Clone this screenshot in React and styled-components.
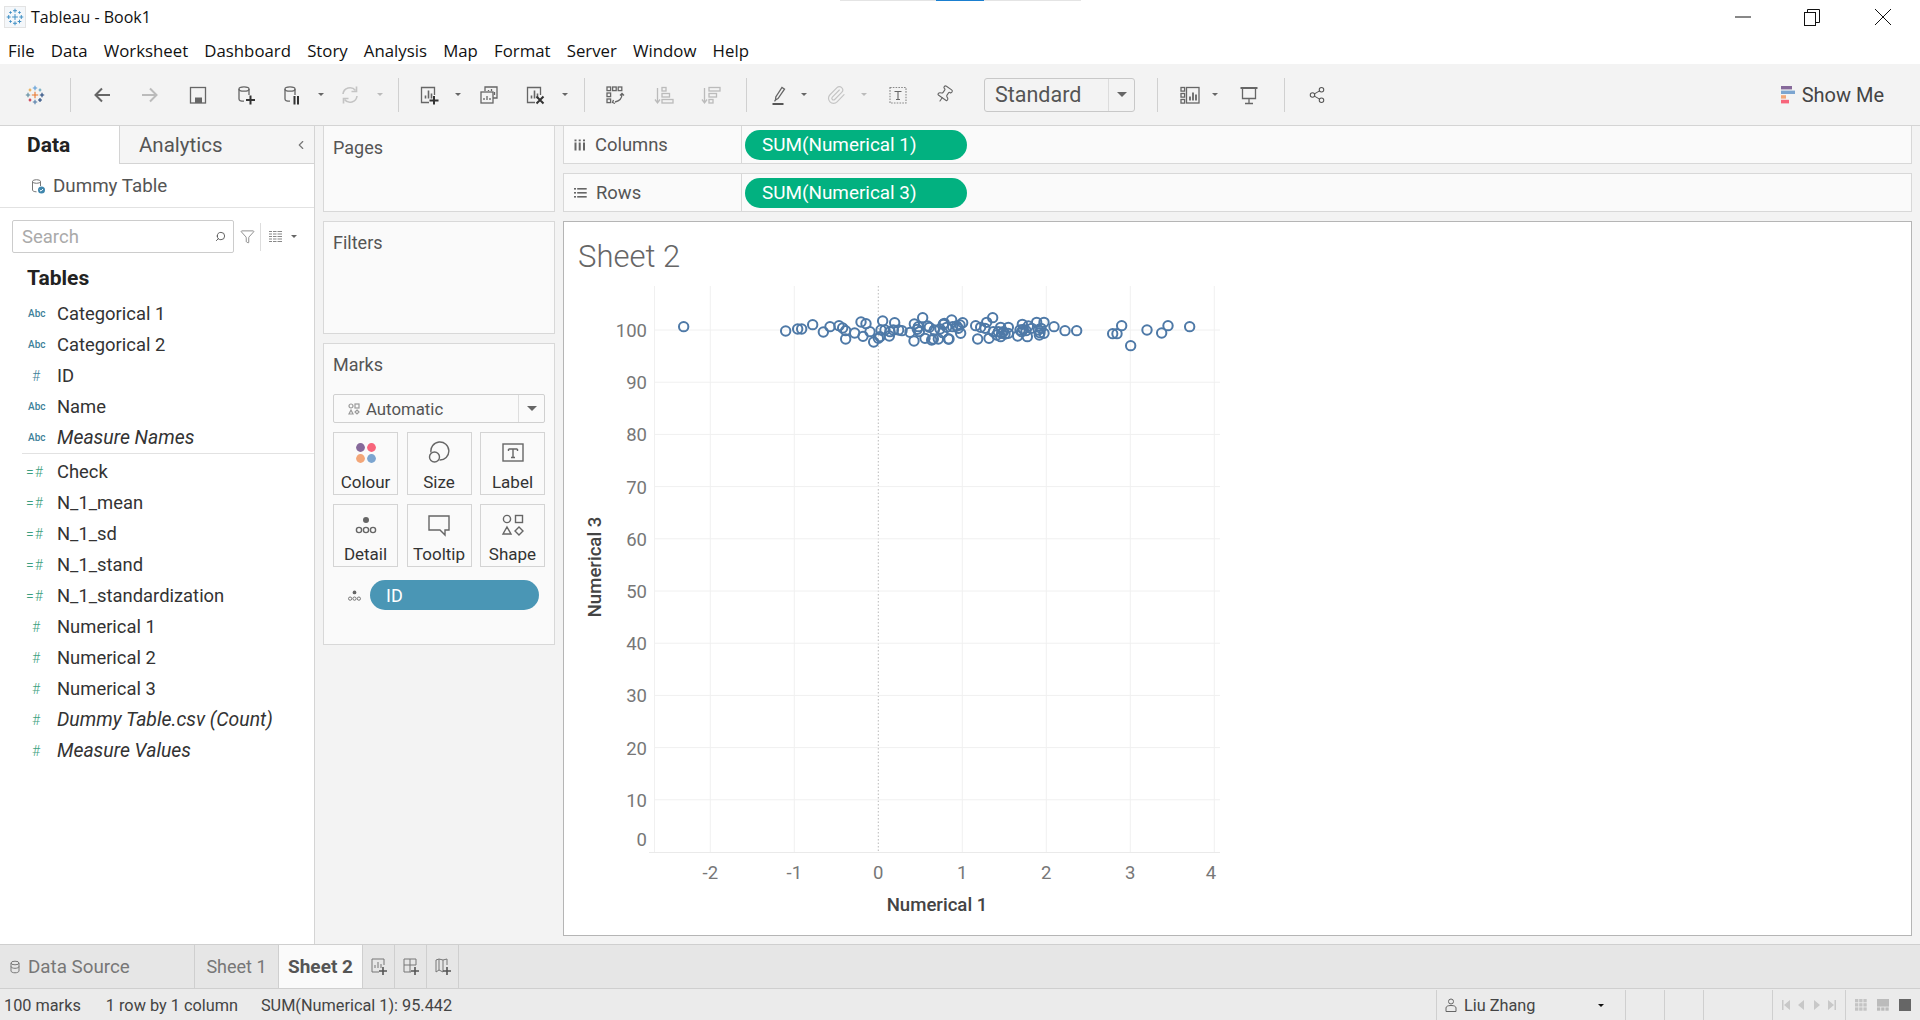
import React from "react";
import styled, { createGlobalStyle } from "styled-components";
import { Paperclip, Pin, Share2, ChevronLeft, Search as SearchIcon, Filter } from "lucide-react";

const GlobalStyle = createGlobalStyle`
  html, body { margin: 0; padding: 0; height: 100%; background: #f3f3f3; overflow: hidden; }
  body { font-family: "Roboto", "Liberation Sans", sans-serif; color: #333; }
  * { box-sizing: border-box; }
`;

// ---------- data ----------
const dims = [
  { name: "Categorical 1", kind: "abc" },
  { name: "Categorical 2", kind: "abc" },
  { name: "ID", kind: "dimnum" },
  { name: "Name", kind: "abc" },
  { name: "Measure Names", kind: "abc", italic: true },
];
const measures = [
  { name: "Check", kind: "calc" },
  { name: "N_1_mean", kind: "calc" },
  { name: "N_1_sd", kind: "calc" },
  { name: "N_1_stand", kind: "calc" },
  { name: "N_1_standardization", kind: "calc" },
  { name: "Numerical 1", kind: "num" },
  { name: "Numerical 2", kind: "num" },
  { name: "Numerical 3", kind: "num" },
  { name: "Dummy Table.csv (Count)", kind: "num", italic: true },
  { name: "Measure Values", kind: "num", italic: true },
];
const menus = ["File", "Data", "Worksheet", "Dashboard", "Story", "Analysis", "Map", "Format", "Server", "Window", "Help"];

// points read off the chart, [x, y] in zoomed crop units
const leftPts = [[71,110],[377,123],[413,117],[425,117],[458,104],[490,126],[510,110],[537,107],[548,114],[557,122],[557,147],[584,129],[609,139],[603,96],[618,101],[630,125],[641,156],[655,145],[660,140],[668,93],[663,120],[675,120],[688,138],[690,125],[704,98],[700,120],[716,120],[726,122],[750,127],[762,153],[763,102],[772,118],[778,125],[788,83],[775,110],[795,145],[803,108],[808,112],[815,150],[820,147],[823,120],[835,147],[840,117],[853,100],[865,147]];
const rightPts = [[10,103],[27,147],[35,90],[38,110],[55,115],[62,130],[68,98],[60,105],[107,107],[122,112],[113,147],[140,97],[158,83],[147,145],[160,125],[135,115],[182,112],[175,125],[190,125],[182,140],[195,132],[205,112],[205,130],[233,138],[240,120],[247,103],[250,118],[262,140],[265,108],[275,115],[290,97],[295,120],[298,135],[303,115],[312,97],[312,130],[342,110],[375,122],[410,122],[518,131],[531,131],[545,107],[572,167],[621,120],[665,129],[684,107],[749,110],[185,130],[300,128],[258,122],[20,112],[50,108],[170,135],[245,125],[8,128]];
const points = [
  ...leftPts.map(([x, y]) => [660 + x / 3, 290 + y / 3]),
  ...rightPts.map(([x, y]) => [940 + x / 3, 290 + y / 3]),
];

// ---------- icons ----------
const Svg = ({ size = 20, color = "#666", sw = 1.3, children }) => (
  <svg width={size} height={size} viewBox="0 0 20 20" fill="none" stroke={color} strokeWidth={sw}>
    {children}
  </svg>
);

const crosses = [
  [10, 10, 3.2, "#e8762c"], [10, 3, 2.2, "#5b9bd5"], [10, 17, 2.2, "#4e79a7"], [3, 10, 2.2, "#59879b"], [17, 10, 2.2, "#1f447a"],
  [5, 5, 1.4, "#e8a33c"], [15, 5, 1.4, "#5fa2b8"], [5, 15, 1.4, "#c72035"], [15, 15, 2, "#1f447a"],
];
const TableauLogo = ({ size = 20, mono }) => (
  <svg width={size} height={size} viewBox="0 0 20 20" fill="none" strokeWidth={1.1}>
    {crosses.map(([x, y, l, c], i) => (
      <path key={i} d={`M${x - l} ${y}H${x + l}M${x} ${y - l}V${y + l}`} stroke={mono || c} />
    ))}
  </svg>
);

const Back = ({ color }) => <Svg color={color} sw={2}><path d="M18 10H4M10 3.5L3.5 10 10 16.5" /></Svg>;
const Forward = ({ color }) => <Svg color={color} sw={2}><path d="M2 10h14M10 3.5l6.5 6.5-6.5 6.5" /></Svg>;
const Save = () => <Svg><rect x="2.5" y="2.5" width="15" height="15.5" /><rect x="7" y="12.5" width="7" height="5.5" fill="#666" stroke="none" /></Svg>;
const Cyl = () => (<><ellipse cx="8" cy="4" rx="5" ry="2.2" /><path d="M3 4v10c0 1.2 2 2.2 5 2.2M13 4v6" /></>);
const AddData = () => <Svg><Cyl /><path d="M14.5 10.5v9M10 15h9" stroke="#333" strokeWidth="2" /></Svg>;
const PauseData = () => <Svg><Cyl /><path d="M12.5 11v8.5M16 11v8.5" stroke="#333" strokeWidth="2" /></Svg>;
const Refresh = () => <Svg color="#c4c4c4" sw={1.6}><path d="M3 9a7 7 0 0 1 12.5-3.5M17 11A7 7 0 0 1 4.5 14.5" /><path d="M16.5 1.5v5h-5M3.5 18.5v-5h5" /></Svg>;
const Bars = () => <path d="M6.5 13.5v-3M9.5 13.5v-8M12.5 13.5v-5" strokeWidth="1.6" />;
const NewSheet = () => <Svg><path d="M10 17.5H2.5v-15h13V10" /><Bars /><path d="M15 11v8.5M10.5 15.5h9" stroke="#333" strokeWidth="2" /></Svg>;
const Duplicate = () => <Svg><path d="M6 6V2h12v11h-4" /><path d="M9.5 6V5M12.5 6V4M15.5 10V7" /><rect x="2" y="7" width="12" height="11" /><path d="M5 15v-2M8 15v-4M11 15v-2" /></Svg>;
const ClearSheet = () => <Svg><path d="M10 17.5H2.5v-15h13V10" /><Bars /><path d="M11.5 11.5l7 7M18.5 11.5l-7 7" stroke="#333" strokeWidth="2" /></Svg>;
const Swap = () => (
  <Svg>
    <rect x="2" y="2" width="3.6" height="3.6" /><rect x="7.6" y="2" width="3.6" height="3.6" /><rect x="13.2" y="2" width="3.6" height="3.6" />
    <rect x="2" y="8" width="3.6" height="3.6" /><rect x="2" y="14" width="3.6" height="3.6" />
    <path d="M17 9c0 4-2.5 7-7 8M8.5 15l-1 2.5 2.5 1M15 10.5l2-2 2 2" />
  </Svg>
);
const SortAsc = () => (
  <Svg color="#bbb"><path d="M3.5 3v14M1 14.5L3.5 18 6 14.5" /><rect x="8" y="2.5" width="4" height="3.5" /><rect x="8" y="8.5" width="7.5" height="3.5" /><rect x="8" y="14.5" width="11" height="3.5" /></Svg>
);
const SortDesc = () => (
  <Svg color="#bbb"><path d="M3.5 3v14M1 14.5L3.5 18 6 14.5" /><rect x="8" y="2.5" width="11" height="3.5" /><rect x="8" y="8.5" width="7.5" height="3.5" /><rect x="8" y="14.5" width="4" height="3.5" /></Svg>
);
const Highlighter = () => (
  <Svg><path d="M9 13.5L6.5 15l.3-3L13 2.5l2.5 1.6L9 13.5zM6.5 15l-1 1.3" /><rect x="3.5" y="18" width="11" height="2" fill="#555" stroke="none" /></Svg>
);
const TextBox = () => (
  <Svg color="#888" sw={1.1}><rect x="2" y="2.5" width="16" height="15.5" strokeDasharray="1.6 1.2" /><path d="M6.5 6.5h7M10 6.5v8M8 14.5h4" stroke="#666" /></Svg>
);
const FitIcon = () => (
  <Svg>
    <rect x="1" y="2.5" width="3.6" height="3.6" /><rect x="1" y="8.5" width="3.6" height="3.6" /><rect x="1" y="14.5" width="3.6" height="3.6" />
    <rect x="6.5" y="2.5" width="12.5" height="15.5" /><path d="M10 15.5v-4M13 15.5v-8M16 15.5v-6" strokeWidth="1.8" />
  </Svg>
);
const Present = () => <Svg><path d="M1.5 3h17" strokeWidth="2" /><path d="M3.5 3v10.5h13V3M10 13.5v5M6 18.5h8" /></Svg>;
const ShowMeIcon = () => (
  <svg width="14" height="18" viewBox="0 0 14 18">
    <rect x="0" y="0" width="11" height="3.4" fill="#86699a" />
    <rect x="0" y="4.6" width="14" height="3.4" fill="#7ca5d0" />
    <rect x="0" y="9.2" width="5" height="3.4" fill="#f3a678" />
    <rect x="0" y="13.8" width="8" height="3.6" fill="#f7657b" />
  </svg>
);
const WinMin = () => <svg width="16" height="16" viewBox="0 0 16 16"><path d="M0 8h16" stroke="#111" /></svg>;
const WinRestore = () => (
  <svg width="16" height="18" viewBox="0 0 16 18" fill="none" stroke="#111"><rect x="0.5" y="4.5" width="11" height="13" /><path d="M3.5 4.5v-3h12v13h-4" /></svg>
);
const WinClose = () => <svg width="16" height="16" viewBox="0 0 16 16"><path d="M0 0l16 16M16 0L0 16" stroke="#111" /></svg>;
const Cylinder = ({ size = 14, color = "#777" }) => (
  <svg width={size} height={size} viewBox="0 0 14 14" fill="none" stroke={color} strokeWidth="1"><ellipse cx="7" cy="3" rx="4" ry="1.8" /><path d="M3 3v8c0 1 1.8 1.8 4 1.8s4-.8 4-1.8V3M3 6.5c0 1 1.8 1.8 4 1.8s4-.8 4-1.8" /></svg>
);
const DataSourceCheck = () => (
  <svg width="16" height="16" viewBox="0 0 16 16" fill="none" stroke="#777"><ellipse cx="6.5" cy="3.5" rx="4" ry="1.8" /><path d="M2.5 3.5v8.5c0 1 1.6 1.8 4 1.8M10.5 3.5V8" /><circle cx="11.5" cy="12" r="3.5" fill="#3f86ad" stroke="none" /><path d="M9.8 12l1.2 1.2 2-2.2" stroke="#fff" /></svg>
);
const ColourIcon = () => (
  <svg width="24" height="24" viewBox="0 0 24 24"><circle cx="6.5" cy="6.5" r="4.4" fill="#86699a" /><circle cx="17.5" cy="6.5" r="4.4" fill="#f7657b" /><circle cx="6.5" cy="17.5" r="4.4" fill="#f3a678" /><circle cx="17.5" cy="17.5" r="4.4" fill="#7ca5d0" /></svg>
);
const SizeIcon = () => (
  <svg width="24" height="24" viewBox="0 0 24 24" fill="none" stroke="#666" strokeWidth="1.4"><circle cx="7.5" cy="16" r="5" /><path d="M4 11.5A9 9 0 1 1 12.5 19" /></svg>
);
const LabelIcon = () => (
  <svg width="24" height="24" viewBox="0 0 24 24" fill="none" stroke="#666" strokeWidth="1.4"><rect x="2" y="3" width="20" height="17" /><path d="M7.5 8h9M12 8v8.5M10 16.5h4M7.5 8v2M16.5 8v2" /></svg>
);
const DetailIcon = ({ size = 24 }) => (
  <svg width={size} height={size} viewBox="0 0 24 24" fill="none" stroke="#666" strokeWidth="1.4"><circle cx="12" cy="7" r="3" fill="#666" stroke="none" /><circle cx="5" cy="17" r="2.6" /><circle cx="12" cy="17" r="2.6" /><circle cx="19" cy="17" r="2.6" /></svg>
);
const TooltipIcon = () => (
  <svg width="24" height="24" viewBox="0 0 24 24" fill="none" stroke="#666" strokeWidth="1.4"><path d="M2 3h20v14h-4v5l-5-5H2z" /></svg>
);
const ShapeIcon = () => (
  <svg width="24" height="24" viewBox="0 0 24 24" fill="none" stroke="#666" strokeWidth="1.4"><circle cx="6" cy="6" r="3.6" /><rect x="14.5" y="2.5" width="7" height="7" /><path d="M6 14l4 7H2zM18 14l4 4-4 4-4-4z" /></svg>
);
const AutoIcon = () => (
  <svg width="12" height="12" viewBox="0 0 24 24" fill="none" stroke="#999" strokeWidth="2.4"><circle cx="6" cy="6" r="4" /><rect x="14" y="2" width="8" height="8" /><path d="M6 14l4 8H2zM18 14l4 4-4 4-4-4z" /></svg>
);
const ColumnsIcon = () => <svg width="12" height="12" viewBox="0 0 12 12" fill="#666"><rect x="0.5" y="3.5" width="2" height="8" /><rect x="4.7" y="3.5" width="2" height="8" /><rect x="9" y="3.5" width="2" height="8" /><rect x="0.5" y="0.5" width="2" height="1.8" /><rect x="4.7" y="0.5" width="2" height="1.8" /><rect x="9" y="0.5" width="2" height="1.8" /></svg>;
const RowsIcon = () => <svg width="13" height="12" viewBox="0 0 13 12" fill="#666"><rect x="0" y="1" width="2" height="1.6" /><rect x="0" y="5" width="2" height="1.6" /><rect x="0" y="9" width="2" height="1.6" /><rect x="3.2" y="1" width="9.5" height="1.6" /><rect x="3.2" y="5" width="9.5" height="1.6" /><rect x="3.2" y="9" width="9.5" height="1.6" /></svg>;
const ListView = () => <svg width="13" height="11" viewBox="0 0 13 11" fill="#888"><path d="M0 0h3v1H0zM4 0h3.5v1H4zM8.5 0H13v1H8.5zM0 2.5h3v1H0zM4 2.5h3.5v1H4zM8.5 2.5H13v1H8.5zM0 5h3v1H0zM4 5h3.5v1H4zM8.5 5H13v1H8.5zM0 7.5h3v1H0zM4 7.5h3.5v1H4zM8.5 7.5H13v1H8.5zM0 10h3v1H0zM4 10h3.5v1H4zM8.5 10H13v1H8.5z" /></svg>;
const AddTab = ({ children }) => (
  <svg width="16" height="17" viewBox="0 0 16 17" fill="none" stroke="#777">{children}<path d="M12 9v8M8 13h8" stroke="#555" strokeWidth="1.6" /></svg>
);
const UserIcon = () => <svg width="12" height="15" viewBox="0 0 12 15" fill="none" stroke="#666"><circle cx="6" cy="3.5" r="2.5" /><path d="M1 13.5V10c0-1.5 1.5-2.5 5-2.5s5 1 5 2.5v3.5z" /></svg>;
const Nav = ({ d }) => <svg width="10" height="10" viewBox="0 0 10 10" fill="#c8c8c8"><path d={d} /></svg>;
const Grid3 = ({ rows, top }) => (
  <svg width="12" height="12" viewBox="0 0 12 12" fill={top ? "#bbb" : "#c4c4c4"}>
    {rows.map(([x, y, w, h], i) => <rect key={i} x={x} y={y} width={w} height={h} />)}
  </svg>
);
const cells = [];
for (let r = 0; r < 3; r++) for (let c = 0; c < 3; c++) cells.push([c * 4.2, r * 4.2, 3.3, 3.3]);

// ---------- chrome ----------
const Page = styled.div`
  width: 1920px;
  height: 1020px;
  display: flex;
  flex-direction: column;
`;
const Header = styled.div`
  position: relative;
  height: 64px;
  flex: none;
  background: #fff;
`;
const Strip = styled.div`
  position: absolute;
  top: 0;
  left: 840px;
  width: 241px;
  height: 1px;
  background: #e4e4e4;
  &::after {
    content: "";
    position: absolute;
    left: 96px;
    width: 48px;
    height: 1px;
    background: #1a7fd0;
  }
`;
const TitleRow = styled.div`
  height: 34px;
  display: flex;
  align-items: center;
  padding-left: 4px;
  font-family: "Open Sans", "Liberation Sans", sans-serif;
  font-size: 16px;
  color: #111;
`;
const AppIcon = styled.div`
  width: 22px;
  height: 22px;
  display: flex;
  align-items: center;
  justify-content: center;
  background: #f4f7fa;
  border: 1px solid #e3e3e3;
  margin-right: 5px;
`;
const WinControls = styled.div`
  margin-left: auto;
  display: flex;
  align-items: center;
`;
const WinBtn = styled.div`
  width: 16px;
  display: flex;
  margin-left: ${(p) => p.$ml}px;
`;
const MenuBar = styled.div`
  height: 32px;
  display: flex;
  align-items: center;
  padding-left: 8px;
  gap: 16.2px;
  font-family: "Open Sans", "Liberation Sans", sans-serif;
  font-size: 16.8px;
  color: #111;
`;
const Toolbar = styled.div`
  height: 62px;
  flex: none;
  background: #f3f3f3;
  border-bottom: 1px solid #d4d4d4;
  display: flex;
  align-items: center;
`;
const Tool = styled.div`
  width: ${(p) => p.$w}px;
  margin-left: ${(p) => p.$ml}px;
  flex: none;
  display: flex;
  align-items: center;
  justify-content: center;
`;
const Sep = styled.div`
  width: 1px;
  height: 34px;
  flex: none;
  margin-left: ${(p) => p.$ml}px;
  background: #d0d0d0;
`;
const Caret = styled.div`
  width: 0;
  height: 0;
  border-left: ${(p) => p.$s || 3.5}px solid transparent;
  border-right: ${(p) => p.$s || 3.5}px solid transparent;
  border-top: ${(p) => p.$s || 3.5}px solid ${(p) => p.$color || "#666"};
`;
const Select = styled.div`
  width: 151px;
  height: 34px;
  margin-left: 30px;
  flex: none;
  display: flex;
  align-items: center;
  border: 1px solid #c8c8c8;
  border-radius: 3px;
  font-size: 21.5px;
  color: #555;
`;
const SelectLabel = styled.div`
  flex: 1;
  padding-left: 10px;
`;
const SelectArrow = styled.div`
  width: 26px;
  height: 100%;
  display: flex;
  align-items: center;
  justify-content: center;
  border-left: 1px solid #dcdcdc;
`;
const ShowMe = styled.div`
  margin-left: auto;
  padding-right: 36px;
  display: flex;
  align-items: center;
  gap: 7px;
  font-size: 20px;
  color: #444;
`;

// ---------- main ----------
const Main = styled.div`
  flex: 1;
  display: flex;
  min-height: 0;
`;
const DataPane = styled.div`
  width: 315px;
  flex: none;
  background: #fff;
  border-right: 1px solid #d4d4d4;
`;
const PaneTabs = styled.div`
  display: flex;
  height: 38px;
`;
const PaneTab = styled.div`
  display: flex;
  align-items: center;
  font-size: ${(p) => (p.$active ? "21px" : "20.5px")};
  width: ${(p) => (p.$active ? "119px" : "auto")};
  flex: ${(p) => (p.$active ? "none" : "1")};
  padding-left: ${(p) => (p.$active ? "27px" : "19px")};
  font-weight: ${(p) => (p.$active ? 700 : 400)};
  color: ${(p) => (p.$active ? "#222" : "#555")};
  background: ${(p) => (p.$active ? "#fff" : "#f5f5f5")};
  ${(p) => !p.$active && "border-left: 1px solid #d4d4d4; border-bottom: 1px solid #d4d4d4;"}
`;
const CollapseBtn = styled.div`
  margin-left: auto;
  margin-right: 6px;
  display: flex;
`;
const SourceRow = styled.div`
  height: 44px;
  display: flex;
  align-items: center;
  padding-left: 30px;
  gap: 7px;
  font-size: 18.8px;
  color: #555;
  border-bottom: 1px solid #e2e2e2;
`;
const SearchRow = styled.div`
  display: flex;
  align-items: center;
  padding: 12px 0 0 12px;
`;
const SearchBox = styled.div`
  width: 222px;
  height: 33px;
  border: 1px solid #ccc;
  border-radius: 2px;
  display: flex;
  align-items: center;
  justify-content: space-between;
  padding: 0 7px 0 9px;
  font-size: 18.5px;
  color: #aaa;
`;
const FilterBtn = styled.div`
  width: 26px;
  display: flex;
  justify-content: center;
`;
const ViewOpts = styled.div`
  border-left: 1px solid #ddd;
  height: 28px;
  display: flex;
  align-items: center;
  padding-left: 8px;
  gap: 9px;
`;
const SectionTitle = styled.div`
  height: 26px;
  margin-top: 12px;
  padding-left: 27px;
  display: flex;
  align-items: center;
  font-size: 21px;
  font-weight: 700;
  color: #222;
`;
const FieldList = styled.div`
  padding-top: ${(p) => p.$top || 0}px;
`;
const Field = styled.div`
  height: 31px;
  display: flex;
  align-items: center;
  font-size: ${(p) => (p.$italic ? "19.4px" : "18.4px")};
  color: #333;
  font-style: ${(p) => (p.$italic ? "italic" : "normal")};
`;
const FieldType = styled.div`
  width: 57px;
  flex: none;
  padding-left: ${(p) => (p.$kind === "calc" ? "26px" : p.$kind === "abc" ? "28px" : "32px")};
  font-style: normal;
  font-size: ${(p) => (p.$kind === "abc" ? "10px" : "14px")};
  font-weight: ${(p) => (p.$kind === "abc" ? 500 : 300)};
  letter-spacing: ${(p) => (p.$kind === "calc" ? "1px" : "0")};
  color: ${(p) => (p.$kind === "abc" || p.$kind === "dimnum" ? "#3d7f99" : "#3c9f80")};
  white-space: nowrap;
`;
const FieldDivider = styled.div`
  height: 1px;
  margin: 0 0 2px 22px;
  background: #e2e2e2;
`;
const ShelfColumn = styled.div`
  width: 232px;
  flex: none;
  margin-left: 8px;
  display: flex;
  flex-direction: column;
  gap: 9px;
`;
const Card = styled.div`
  height: ${(p) => p.$h}px;
  flex: none;
  background: #fafafa;
  border: 1px solid #d8d8d8;
  border-top-width: ${(p) => (p.$flush ? 0 : 1)}px;
  padding: ${(p) => (p.$flush ? 11 : 10)}px 9px 0;
  font-size: 18px;
  color: #555;
`;
const MarkSelect = styled.div`
  height: 29px;
  margin-top: 19px;
  display: flex;
  align-items: center;
  border: 1px solid #d0d0d0;
  border-radius: 2px;
  font-size: 16.8px;
  color: #555;
`;
const MarkSelectLabel = styled.div`
  flex: 1;
  display: flex;
  align-items: center;
  gap: 6px;
  padding-left: 14px;
`;
const MarkSelectArrow = styled.div`
  width: 26px;
  height: 100%;
  display: flex;
  align-items: center;
  justify-content: center;
  border-left: 1px solid #dedede;
`;
const MarkGrid = styled.div`
  display: grid;
  grid-template-columns: 65px 65px 65px;
  grid-auto-rows: 63px;
  justify-content: space-between;
  row-gap: 9px;
  margin-top: 9px;
`;
const MarkCard = styled.div`
  display: flex;
  flex-direction: column;
  align-items: center;
  padding-top: 8px;
  border: 1px solid #d4d4d4;
  font-size: 17px;
  color: #333;
  svg { margin-bottom: 7px; }
`;
const MarkPillRow = styled.div`
  display: flex;
  align-items: center;
  margin-top: 13px;
  padding-left: 14px;
  gap: 8px;
`;
const MarkPill = styled.div`
  width: 169px;
  height: 30px;
  display: flex;
  align-items: center;
  padding-left: 16px;
  border-radius: 15px;
  background: #4a96b5;
  color: #fff;
  font-size: 18px;
`;
const ViewColumn = styled.div`
  flex: 1;
  min-width: 0;
  margin-left: 8px;
  padding: 0 8px 8px 0;
  display: flex;
  flex-direction: column;
  gap: 9px;
`;
const Shelf = styled.div`
  height: ${(p) => p.$h}px;
  flex: none;
  display: flex;
  background: #fafafa;
  border: 1px solid #d8d8d8;
  border-top-width: ${(p) => (p.$flush ? 0 : 1)}px;
`;
const ShelfLabel = styled.div`
  width: 178px;
  flex: none;
  display: flex;
  align-items: center;
  gap: 9px;
  padding-left: 10px;
  border-right: 1px solid #d8d8d8;
  font-size: 18.4px;
  color: #555;
`;
const Pill = styled.div`
  width: 222px;
  height: 30px;
  align-self: center;
  margin-left: 3px;
  display: flex;
  align-items: center;
  padding-left: 17px;
  border-radius: 15px;
  background: #02b180;
  color: #fff;
  font-size: 18.9px;
`;
const Viz = styled.div`
  flex: 1;
  min-height: 0;
  background: #fff;
  border: 1px solid #b5b5b5;
  overflow: hidden;
`;
const VizTitle = styled.div`
  height: 58px;
  display: flex;
  align-items: center;
  padding: 10px 0 0 14px;
  font-size: 31px;
  font-weight: 300;
  color: #666;
`;
const AxisText = styled.text`
  font-family: "Roboto", sans-serif;
  font-size: ${(p) => p.$size || 18.5}px;
  fill: ${(p) => p.$fill || "#777"};
  font-weight: ${(p) => p.$weight || 400};
`;

// ---------- bottom ----------
const TabBar = styled.div`
  height: 45px;
  flex: none;
  display: flex;
  background: #e6e6e6;
  border-top: 1px solid #cfcfcf;
  border-bottom: 1px solid #cfcfcf;
`;
const SourceTab = styled.div`
  width: 195px;
  flex: none;
  display: flex;
  align-items: center;
  padding-left: 8px;
  gap: 6px;
  font-size: 18.8px;
  color: #777;
  border-right: 1px solid #cfcfcf;
`;
const SheetTab = styled.div`
  width: ${(p) => p.$w}px;
  flex: none;
  display: flex;
  align-items: center;
  justify-content: center;
  font-size: ${(p) => (p.$active ? "19px" : "18px")};
  font-weight: ${(p) => (p.$active ? 700 : 400)};
  color: ${(p) => (p.$active ? "#555" : "#777")};
  background: ${(p) => (p.$active ? "#fafafa" : "transparent")};
  border-right: 1px solid #cfcfcf;
`;
const AddBtn = styled.div`
  width: 32px;
  flex: none;
  display: flex;
  align-items: center;
  justify-content: center;
  border-right: 1px solid #cfcfcf;
`;
const StatusBar = styled.div`
  height: 31px;
  flex: none;
  display: flex;
  align-items: center;
  padding-top: 1px;
  background: #ebebeb;
  font-size: 16.3px;
  color: #444;
`;
const StatusText = styled.div`
  margin-left: ${(p) => p.$ml}px;
  white-space: nowrap;
`;
const StatusCell = styled.div`
  width: ${(p) => p.$w}px;
  height: 100%;
  flex: none;
  display: flex;
  align-items: center;
  justify-content: ${(p) => p.$justify || "flex-start"};
  gap: ${(p) => p.$gap || 0}px;
  padding: 0 ${(p) => p.$pad || 0}px;
  border-left: 1px solid #cfcfcf;
`;
const StatusRight = styled.div`
  margin-left: auto;
  display: flex;
  height: 100%;
`;
const UserName = styled.span`
  flex: 1;
`;
const CaretGap = styled.span`
  width: 6px;
`;
const SolidView = styled.div`
  width: 12px;
  height: 12px;
  background: #666;
`;

const tools = [
  { ml: 24, w: 22, el: <TableauLogo size={20} /> },
  { sep: 24 },
  { ml: 21, w: 20, el: <Back color="#666" /> },
  { ml: 28, w: 20, el: <Forward color="#bbb" /> },
  { ml: 28, w: 20, el: <Save /> },
  { ml: 28, w: 20, el: <AddData /> },
  { ml: 26, w: 20, el: <PauseData /> },
  { ml: 15, w: 8, el: <Caret /> },
  { ml: 15, w: 20, el: <Refresh /> },
  { ml: 16, w: 8, el: <Caret $color="#bbb" /> },
  { sep: 14 },
  { ml: 20, w: 20, el: <NewSheet /> },
  { ml: 15, w: 8, el: <Caret /> },
  { ml: 17, w: 20, el: <Duplicate /> },
  { ml: 26, w: 20, el: <ClearSheet /> },
  { ml: 16, w: 8, el: <Caret /> },
  { sep: 15 },
  { ml: 20, w: 20, el: <Swap /> },
  { ml: 29, w: 20, el: <SortAsc /> },
  { ml: 27, w: 20, el: <SortDesc /> },
  { sep: 25 },
  { ml: 22, w: 20, el: <Highlighter /> },
  { ml: 11, w: 8, el: <Caret /> },
  { ml: 18, w: 20, el: <Paperclip size={20} color="#c4c4c4" strokeWidth={1.4} /> },
  { ml: 14, w: 8, el: <Caret $color="#bbb" /> },
  { ml: 20, w: 20, el: <TextBox /> },
  { ml: 26, w: 20, el: <Pin size={19} color="#666" strokeWidth={1.4} style={{ transform: "rotate(35deg)" }} /> },
];
const toolsAfter = [
  { sep: 22 },
  { ml: 22, w: 20, el: <FitIcon /> },
  { ml: 11, w: 8, el: <Caret /> },
  { ml: 20, w: 20, el: <Present /> },
  { sep: 25 },
  { ml: 22, w: 20, el: <Share2 size={18} color="#555" strokeWidth={1.4} /> },
];
const renderTools = (list) =>
  list.map((t, i) => (t.sep ? <Sep key={i} $ml={t.sep} /> : <Tool key={i} $ml={t.ml} $w={t.w}>{t.el}</Tool>));

const FieldItem = ({ f }) => (
  <Field $italic={f.italic}>
    <FieldType $kind={f.kind}>{f.kind === "abc" ? "Abc" : f.kind === "calc" ? "=#" : "#"}</FieldType>
    {f.name}
  </Field>
);

const xs = [-2, -1, 0, 1, 2, 3, 4];
const ys = [100, 90, 80, 70, 60, 50, 40, 30, 20, 10];
const xPos = (v) => 878.3 + v * 84;
const yPos = (v) => 852 - v * 5.22;

const Chart = () => (
  <svg width="700" height="640" viewBox="564 280 700 640" style={{ display: "block" }}>
    <path d="M654.5 286V852" stroke="#f0f0f0" />
    {xs.map((v) =>
      v === 0 ? (
        <path key={v} d={`M${xPos(v)} 286V852`} stroke="#bbb" strokeDasharray="1.5 2" />
      ) : (
        <path key={v} d={`M${xPos(v)} 286V852`} stroke="#f0f0f0" />
      )
    )}
    {ys.map((v) => (
      <path key={v} d={`M654 ${yPos(v)}H1220`} stroke="#f0f0f0" />
    ))}
    <path d="M649 852.5H1220" stroke="#eaeaea" />
    {ys.map((v) => (
      <AxisText key={v} x="647" y={yPos(v) + 7} textAnchor="end">{v}</AxisText>
    ))}
    <AxisText x="647" y="846" textAnchor="end">0</AxisText>
    {xs.map((v) => (
      <AxisText key={v} x={v === 4 ? 1211 : xPos(v)} y="879" textAnchor="middle">{v}</AxisText>
    ))}
    <AxisText x="937" y="911" textAnchor="middle" $size={18.6} $fill="#444" $weight={500}>Numerical 1</AxisText>
    <AxisText transform="rotate(-90 596 567)" x="596" y="567" dominantBaseline="middle" textAnchor="middle" $size={18.6} $fill="#444" $weight={500}>Numerical 3</AxisText>
    {points.map(([x, y], i) => (
      <circle key={i} cx={x} cy={y} r="4.7" fill="none" stroke="#4e79a7" strokeWidth="2" />
    ))}
  </svg>
);

function App() {
  return (
    <Page>
      <GlobalStyle />
      <Header>
        <Strip />
        <TitleRow>
          <AppIcon><TableauLogo size={18} mono="#3f8fc4" /></AppIcon>
          Tableau - Book1
          <WinControls>
            <WinBtn $ml={0}><WinMin /></WinBtn>
            <WinBtn $ml={53}><WinRestore /></WinBtn>
            <WinBtn $ml={55}><WinClose /></WinBtn>
            <WinBtn $ml={13} />
          </WinControls>
        </TitleRow>
        <MenuBar>
          {menus.map((m) => <span key={m}>{m}</span>)}
        </MenuBar>
      </Header>

      <Toolbar>
        {renderTools(tools)}
        <Select>
          <SelectLabel>Standard</SelectLabel>
          <SelectArrow><Caret $s={5} /></SelectArrow>
        </Select>
        {renderTools(toolsAfter)}
        <ShowMe><ShowMeIcon />Show Me</ShowMe>
      </Toolbar>

      <Main>
        <DataPane>
          <PaneTabs>
            <PaneTab $active>Data</PaneTab>
            <PaneTab>
              Analytics
              <CollapseBtn><ChevronLeft size={14} color="#777" /></CollapseBtn>
            </PaneTab>
          </PaneTabs>
          <SourceRow><DataSourceCheck />Dummy Table</SourceRow>
          <SearchRow>
            <SearchBox>Search<SearchIcon size={11} color="#555" style={{ transform: "scaleX(-1)" }} /></SearchBox>
            <FilterBtn><Filter size={15} color="#777" strokeWidth={1.3} /></FilterBtn>
            <ViewOpts><ListView /><Caret /></ViewOpts>
          </SearchRow>
          <SectionTitle>Tables</SectionTitle>
          <FieldList $top={7}>
            {dims.map((f) => <FieldItem key={f.name} f={f} />)}
          </FieldList>
          <FieldDivider />
          <FieldList>
            {measures.map((f) => <FieldItem key={f.name} f={f} />)}
          </FieldList>
        </DataPane>

        <ShelfColumn>
          <Card $h={86} $flush>Pages</Card>
          <Card $h={113}>Filters</Card>
          <Card $h={302}>
            Marks
            <MarkSelect>
              <MarkSelectLabel><AutoIcon />Automatic</MarkSelectLabel>
              <MarkSelectArrow><Caret $s={5} /></MarkSelectArrow>
            </MarkSelect>
            <MarkGrid>
              <MarkCard><ColourIcon />Colour</MarkCard>
              <MarkCard><SizeIcon />Size</MarkCard>
              <MarkCard><LabelIcon />Label</MarkCard>
              <MarkCard><DetailIcon />Detail</MarkCard>
              <MarkCard><TooltipIcon />Tooltip</MarkCard>
              <MarkCard><ShapeIcon />Shape</MarkCard>
            </MarkGrid>
            <MarkPillRow>
              <DetailIcon size={15} />
              <MarkPill>ID</MarkPill>
            </MarkPillRow>
          </Card>
        </ShelfColumn>

        <ViewColumn>
          <Shelf $h={38} $flush>
            <ShelfLabel><ColumnsIcon />Columns</ShelfLabel>
            <Pill>SUM(Numerical 1)</Pill>
          </Shelf>
          <Shelf $h={39}>
            <ShelfLabel><RowsIcon />Rows</ShelfLabel>
            <Pill>SUM(Numerical 3)</Pill>
          </Shelf>
          <Viz>
            <VizTitle>Sheet 2</VizTitle>
            <Chart />
          </Viz>
        </ViewColumn>
      </Main>

      <TabBar>
        <SourceTab><Cylinder />Data Source</SourceTab>
        <SheetTab $w={84}>Sheet 1</SheetTab>
        <SheetTab $w={84} $active>Sheet 2</SheetTab>
        <AddBtn><AddTab><path d="M8 14H1V1h12v6M4 10V7M7 10V4M10 10V6" /></AddTab></AddBtn>
        <AddBtn><AddTab><path d="M8 14H1V1h12v6M1 7h12M7 1v13" /></AddTab></AddBtn>
        <AddBtn><AddTab><path d="M8 14L4 12 1 14V2l3-1 4 1 4-1v6M4 1v11M8 2v12" /></AddTab></AddBtn>
      </TabBar>

      <StatusBar>
        <StatusText $ml={4}>100 marks</StatusText>
        <StatusText $ml={25}>1 row by 1 column</StatusText>
        <StatusText $ml={23}>SUM(Numerical 1): 95.442</StatusText>
        <StatusRight>
          <StatusCell $w={189} $pad={8} $gap={7}>
            <UserIcon />
            <UserName>Liu Zhang</UserName>
            <Caret $color="#111" />
            <CaretGap />
          </StatusCell>
          <StatusCell $w={39} />
          <StatusCell $w={39} />
          <StatusCell $w={69} />
          <StatusCell $w={73} $justify="space-between" $pad={8}>
            <Nav d="M1 0h1.5v10H1zM9 0v10L3 5z" />
            <Nav d="M8 0v10L2 5z" />
            <Nav d="M2 0v10l6-5z" />
            <Nav d="M9 0H7.5v10H9zM1 0v10l6-5z" />
          </StatusCell>
          <StatusCell $w={75} $justify="space-between" $pad={9}>
            <Grid3 rows={cells} />
            <Grid3 top rows={[[0, 0, 12, 7.6], ...cells.slice(6)]} />
            <SolidView />
          </StatusCell>
        </StatusRight>
      </StatusBar>
    </Page>
  );
}

export default App;
